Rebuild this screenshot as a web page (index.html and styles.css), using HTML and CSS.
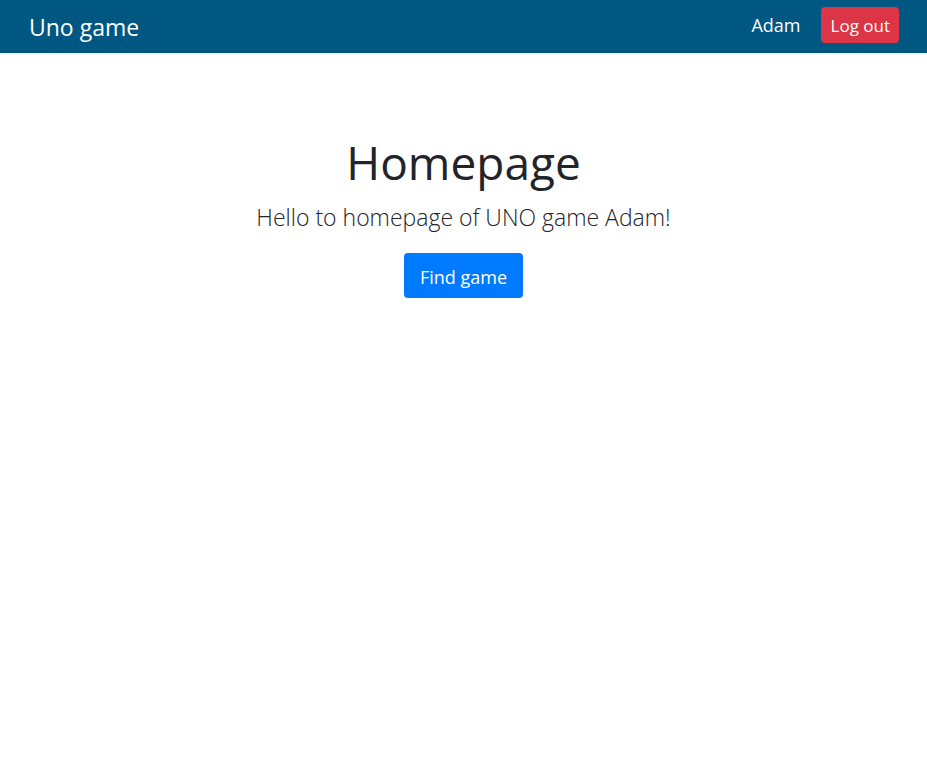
FILE: index.html
```html
<!DOCTYPE html>
<html lang="en">
<head>
<meta charset="utf-8">
<title>Uno game</title>
<link rel="stylesheet" href="styles.css">
</head>
<body>
<header class="navbar">
  <a class="brand" href="#">Uno game</a>
  <nav class="nav">
    <a class="nav-link" href="#">Adam</a>
    <button class="btn btn-danger" type="button">Log out</button>
  </nav>
</header>
<main class="hero">
  <h1 class="title">Homepage</h1>
  <p class="lead">Hello to homepage of UNO game Adam!</p>
  <button class="btn btn-primary" type="button">Find game</button>
</main>
</body>
</html>
```
FILE: styles.css
```css
* {
  box-sizing: border-box;
}

body {
  margin: 0;
  background: #fff;
  color: #212529;
  font-family: "Segoe UI", "Open Sans", "Noto Sans", sans-serif;
  font-size: 18px;
  line-height: 27px;
}

.navbar {
  display: flex;
  align-items: flex-start;
  justify-content: space-between;
  padding: 7px 28px 6px 29px;
  background: #005782;
}

.brand,
.nav-link {
  color: #fff;
  text-decoration: none;
}

.brand {
  font-size: 23px;
  line-height: 40px;
}

.nav {
  display: flex;
  align-items: baseline;
  gap: 20px;
}

.btn {
  border: 0;
  border-radius: 4px;
  color: #fff;
  font: inherit;
  cursor: pointer;
}

.btn-danger {
  padding: 5px 9px 4px 10px;
  background: #dc3545;
  font-size: 17px;
}

.btn-primary {
  padding: 11px 16px 7px;
  background: #007bff;
}

.hero {
  padding: 79px 16px;
  text-align: center;
}

.title {
  margin: 0 0 8px;
  font-size: 46px;
  font-weight: 400;
  line-height: 60px;
}

.lead {
  margin: 0 0 19px;
  font-size: 23px;
  font-weight: 300;
  line-height: 34px;
}
```
